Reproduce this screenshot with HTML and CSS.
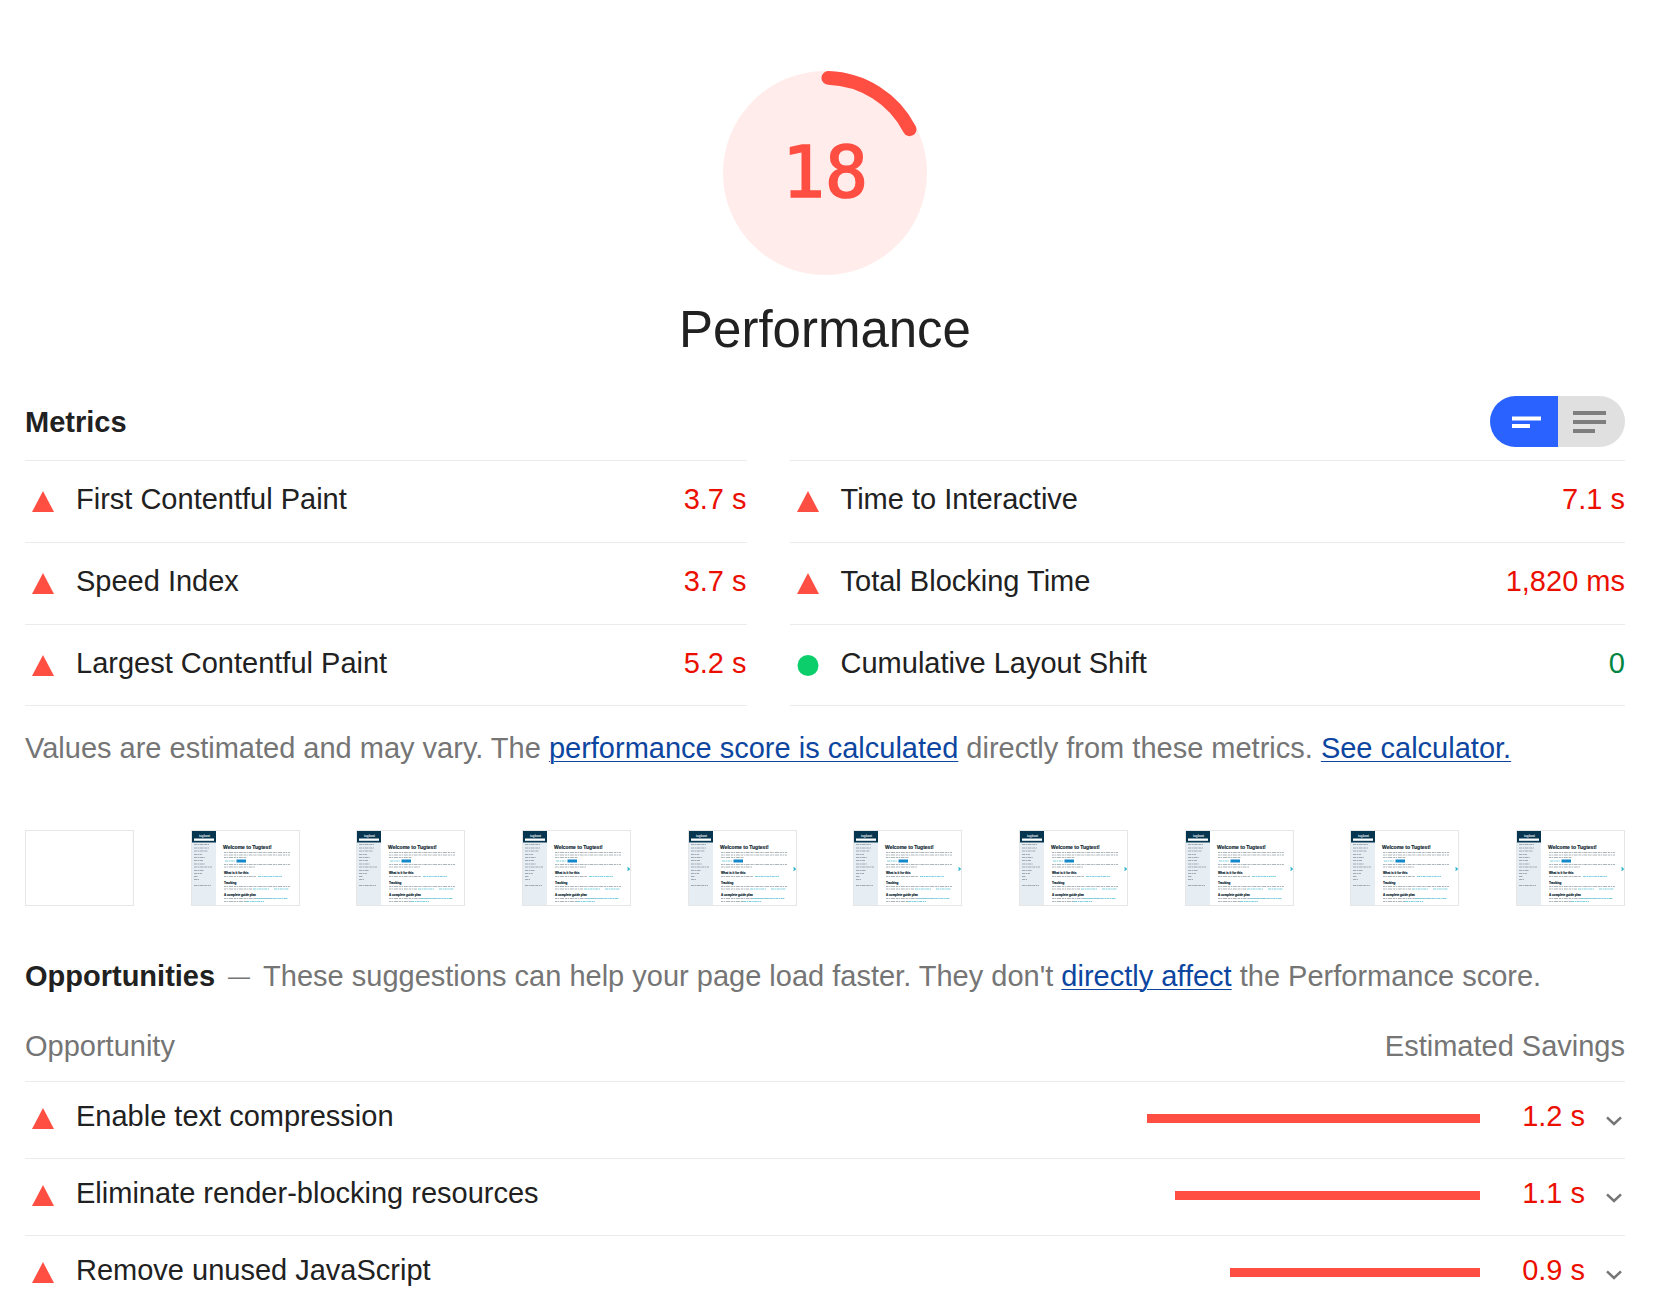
FILE: index.html
```html
<!DOCTYPE html>
<html lang="en">
<head>
<meta charset="utf-8">
<meta name="viewport" content="width=device-width, initial-scale=1">
<title>Performance report</title>
<link rel="stylesheet" href="styles.css">
</head>
<body>
<svg class="defs" aria-hidden="true">
  <symbol id="fail" viewBox="0 0 22 21"><path d="M11 0 22 21H0z" fill="#ff4e42"/></symbol>
  <symbol id="pass" viewBox="0 0 22 22"><circle cx="11" cy="11" r="11" fill="#0cce6b"/></symbol>
  <symbol id="chevron" viewBox="0 0 16 10"><path d="M1 1.4 8 8 15 1.4" fill="none" stroke="#757575" stroke-width="2.5"/></symbol>
  <symbol id="page" viewBox="0 0 107 74">
    <path d="M0 0h24v74H0z" fill="#e6edf3"/>
    <path d="M0 0h24v11.500H0z" fill="#06364f"/>
    <path d="M2 7.500h20v2.300H2z" fill="#fff"/>
    <text x="7" y="5.500" font-size="3" font-weight="700" fill="#e0ebf2">tugboat</text>
    <g fill="none" stroke="#98a4af" stroke-width=".9">
      <path stroke-dasharray="3 .6 1.500 .5 4 .7" d="M2 13.500h15M2 17h15M2 20h14M2 23.500h8M2 26.500h11M2 29.500h9M2 33h11M2 36h18M2 39.500h10M2 42.500h8M2 45.500h4M2 48.500h5M2 54.500h17"/>
    </g>
    <g fill="none" stroke="#a3adb1" stroke-width=".9">
      <path stroke-dasharray="2.500 .6 1.200 .7 4 .8" d="M32 21.500h66M32 24h66M32 26.500h23M32 33.500h66M32 36h31M32 45.500h32M32 55.500h66M32 58h28M32 67.500h50M32 70.500h22"/>
    </g>
    <g fill="none" stroke="#7fd0de" stroke-width="1">
      <path stroke-dasharray="3 .6 1.500 .5" d="M33 30h10M66 45.500h24M61 58h16M82 58h15M64 67.500h32M54 70.500h18"/>
    </g>
    <path d="M44.500 28.500h9.500v3h-9.500z" fill="#1287c9"/>
    <g fill="#0c2430" stroke="#0c2430" stroke-width=".15" font-weight="700">
      <text x="31" y="17.500" font-size="5">Welcome to Tugtest!</text>
      <text x="32" y="42.500" font-size="3">What is it for this</text>
      <text x="32" y="52.500" font-size="3">Tracking</text>
      <text x="32" y="64.500" font-size="3">A complete guide plan</text>
    </g>
  </symbol>
  <symbol id="page-next" viewBox="0 0 107 74">
    <use href="#page"/>
    <path d="M104.500 36.500 106.300 38 104.500 39.500" fill="none" stroke="#27b3cc" stroke-width="1.200"/>
  </symbol>
</svg>
<main class="report">
  <header class="score">
    <svg class="gauge" viewBox="0 0 120 120" aria-hidden="true">
      <circle cx="60" cy="60" r="60" fill="#ffeceb"/>
      <path d="M61.900 4.030A56 56 0 0 1 109.800 34.300" fill="none" stroke="#ff4e42" stroke-width="8" stroke-linecap="round"/>
      <text class="gauge-value" x="60" y="74" text-anchor="middle">18</text>
    </svg>
    <h1 class="score-title">Performance</h1>
  </header>

  <section>
    <div class="metrics-head">
      <h2 class="heading">Metrics</h2>
      <div class="toggle" role="radiogroup" aria-label="Metric detail">
        <label class="toggle-option">
          <input class="toggle-input" type="radio" name="view" aria-label="Compact view" checked>
          <svg class="toggle-icon" viewBox="0 0 36 24" aria-hidden="true"><path d="M6 6.500h29v4H6zM6 14h18v4H6z"/></svg>
        </label>
        <label class="toggle-option">
          <input class="toggle-input" type="radio" name="view" aria-label="Expanded view">
          <svg class="toggle-icon" viewBox="0 0 36 24" aria-hidden="true"><path d="M0 1h33v4H0zM0 10h33v4H0zM0 19h22v4H0z"/></svg>
        </label>
      </div>
    </div>
    <div class="metrics">
      <dl class="metric-list">
        <div class="metric"><dt class="name"><svg class="status"><use href="#fail"/></svg>First Contentful Paint</dt><dd class="value">3.7 s</dd></div>
        <div class="metric"><dt class="name"><svg class="status"><use href="#fail"/></svg>Speed Index</dt><dd class="value">3.7 s</dd></div>
        <div class="metric"><dt class="name"><svg class="status"><use href="#fail"/></svg>Largest Contentful Paint</dt><dd class="value">5.2 s</dd></div>
      </dl>
      <dl class="metric-list">
        <div class="metric"><dt class="name"><svg class="status"><use href="#fail"/></svg>Time to Interactive</dt><dd class="value">7.1 s</dd></div>
        <div class="metric"><dt class="name"><svg class="status"><use href="#fail"/></svg>Total Blocking Time</dt><dd class="value">1,820 ms</dd></div>
        <div class="metric"><dt class="name"><svg class="status"><use href="#pass"/></svg>Cumulative Layout Shift</dt><dd class="value value-pass">0</dd></div>
      </dl>
    </div>
    <p class="note">Values are estimated and may vary. The <a class="link" href="#">performance score is calculated</a> directly from these metrics. <a class="link" href="#">See calculator.</a></p>
  </section>

  <div class="filmstrip">
    <svg class="frame"></svg>
    <svg class="frame"><use href="#page"/></svg>
    <svg class="frame"><use href="#page"/></svg>
    <svg class="frame"><use href="#page-next"/></svg>
    <svg class="frame"><use href="#page-next"/></svg>
    <svg class="frame"><use href="#page-next"/></svg>
    <svg class="frame"><use href="#page-next"/></svg>
    <svg class="frame"><use href="#page-next"/></svg>
    <svg class="frame"><use href="#page-next"/></svg>
    <svg class="frame"><use href="#page-next"/></svg>
  </div>

  <section>
    <div class="intro"><h2 class="heading">Opportunities</h2><span class="dash">—</span>These suggestions can help your page load faster. They don't <a class="link" href="#">directly affect</a> the Performance score.</div>
    <table class="opportunities">
      <thead>
        <tr><th class="col-name" scope="col">Opportunity</th><th class="col-savings" scope="col" colspan="3">Estimated Savings</th></tr>
      </thead>
      <tbody>
        <tr>
          <td class="cell"><div class="name"><svg class="status"><use href="#fail"/></svg>Enable text compression</div></td>
          <td class="cell cell-bar"><div class="bar" style="width:100%"></div></td>
          <td class="cell cell-value">1.2 s</td>
          <td class="cell cell-toggle"><button class="expand" aria-label="Show details"><svg class="chevron"><use href="#chevron"/></svg></button></td>
        </tr>
        <tr>
          <td class="cell"><div class="name"><svg class="status"><use href="#fail"/></svg>Eliminate render-blocking resources</div></td>
          <td class="cell cell-bar"><div class="bar" style="width:91.5%"></div></td>
          <td class="cell cell-value">1.1 s</td>
          <td class="cell cell-toggle"><button class="expand" aria-label="Show details"><svg class="chevron"><use href="#chevron"/></svg></button></td>
        </tr>
        <tr>
          <td class="cell"><div class="name"><svg class="status"><use href="#fail"/></svg>Remove unused JavaScript</div></td>
          <td class="cell cell-bar"><div class="bar" style="width:75%"></div></td>
          <td class="cell cell-value">0.9 s</td>
          <td class="cell cell-toggle"><button class="expand" aria-label="Show details"><svg class="chevron"><use href="#chevron"/></svg></button></td>
        </tr>
      </tbody>
    </table>
  </section>
</main>
</body>
</html>
```
FILE: styles.css
```css
* { box-sizing: border-box; }
body {
  margin: 0;
  background: #fff;
  color: #212121;
  font: 29px/34px "Liberation Sans", Arial, sans-serif;
}
h1, h2, p, dl, dd { margin: 0; }
.defs { display: none; }
.report { padding: 71px 37px 0 25px; }

.score {
  display: flex;
  flex-direction: column;
  align-items: center;
  gap: 25px;
}
.gauge { display: block; width: 204px; height: 204px; }
.gauge-value {
  fill: #ff4e42;
  stroke: #ff4e42;
  stroke-width: 1px;
  font-family: "DejaVu Sans Mono", monospace;
  font-size: 42px;
}
.score-title { font-size: 51px; font-weight: 400; line-height: 60px; }
.heading { font-size: 29px; font-weight: 700; }

.metrics-head {
  display: flex;
  align-items: center;
  justify-content: space-between;
  margin: 36px 0 13px;
}
.toggle {
  display: flex;
  width: 135px;
  height: 51px;
  border-radius: 26px;
  overflow: hidden;
}
.toggle-option {
  position: relative;
  flex: 1;
  display: flex;
  align-items: center;
  justify-content: center;
  background: #e0e0e0;
  fill: #7e7e7e;
}
.toggle-option:has(:checked) { background: #2962ff; fill: #fff; }
.toggle-input { position: absolute; inset: 0; margin: 0; opacity: 0; }
.toggle-icon { width: 36px; height: 24px; }

.metrics {
  display: grid;
  grid-template-columns: 19fr 22fr;
  column-gap: 43px;
}
.metric-list { border-top: 1px solid #ebebeb; }
.metric {
  display: flex;
  justify-content: space-between;
  padding: 21px 0 26px;
  border-bottom: 1px solid #ebebeb;
}
.metric:last-child { padding-bottom: 25px; }
.name { display: flex; gap: 22px; padding-left: 7px; }
.status { flex: none; width: 22px; height: 21px; margin-top: 9px; }
.value { color: #eb0f00; }
.value-pass { color: #018642; }
.note { margin-top: 25px; color: #757575; }
.link { color: #0c46a0; text-decoration-thickness: 1px; text-underline-offset: 3px; }

.filmstrip {
  display: flex;
  justify-content: space-between;
  margin: 65px 0 53px;
}
.frame { width: 109px; height: 76px; border: 1px solid #e6e6e6; }

.intro { color: #757575; }
.intro .heading { display: inline; color: #212121; }
.dash { margin: 0 13px; font-size: 22px; line-height: 22px; vertical-align: 2px; }

.opportunities {
  width: 100%;
  margin-top: 36px;
  border-collapse: separate;
  border-spacing: 0;
}
.col-name, .col-savings {
  padding: 0 0 18px;
  color: #757575;
  font-weight: 400;
  text-align: left;
}
.col-savings { text-align: right; }
.cell {
  padding: 17px 0 25px;
  border-top: 1px solid #ebebeb;
  vertical-align: top;
}
.cell-bar { width: 333px; }
.bar { height: 9px; margin: 15px 0 0 auto; background: #ff4e42; }
.cell-value { width: 105px; color: #eb0f00; text-align: right; }
.cell-toggle { width: 40px; }
.expand {
  display: block;
  margin: 17px 3px 0 auto;
  padding: 0;
  border: 0;
  background: none;
}
.chevron { display: block; width: 16px; height: 10px; }
```
